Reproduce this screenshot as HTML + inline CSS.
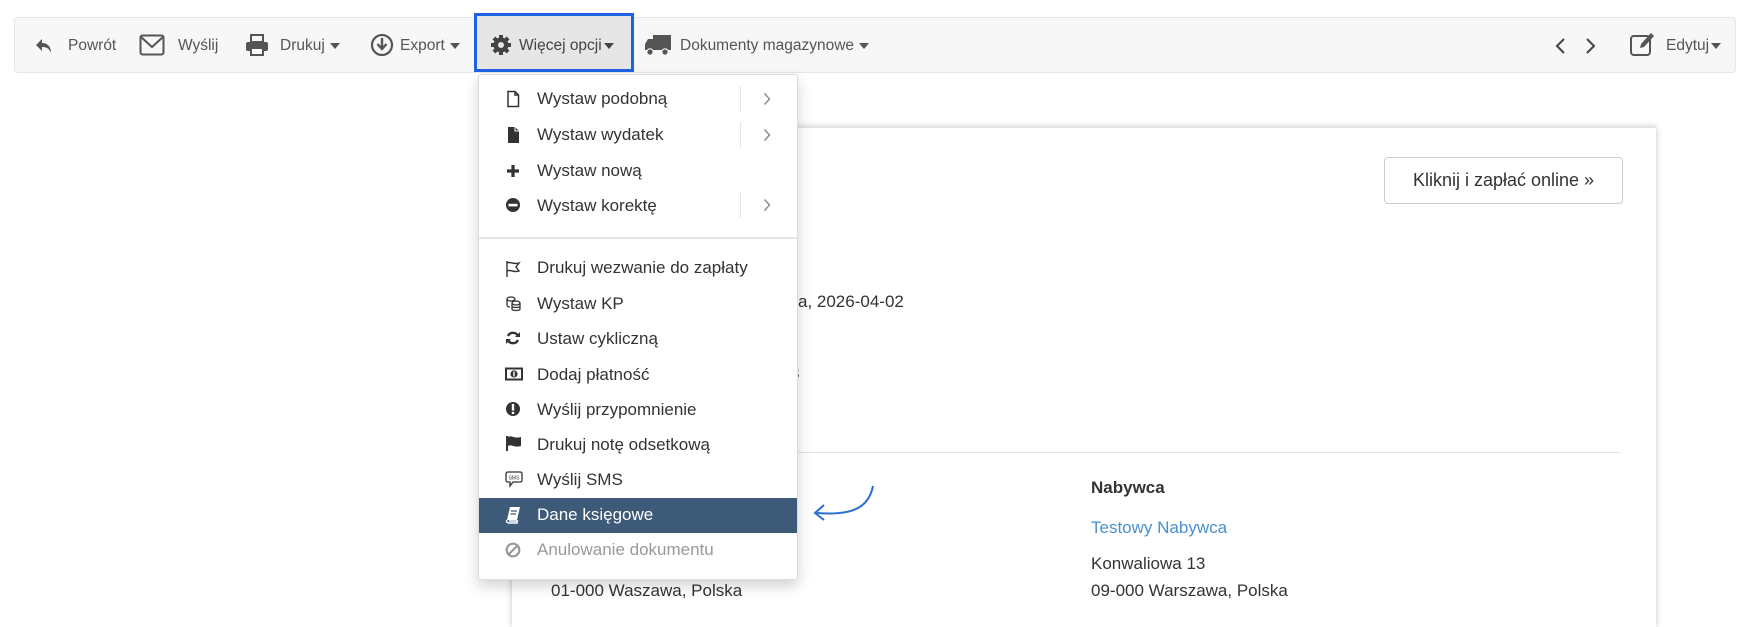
<!DOCTYPE html>
<html><head><meta charset="utf-8"><style>
*{margin:0;padding:0;box-sizing:border-box}
body{width:1738px;height:608px;background:#fff;font-family:"Liberation Sans",Arial,sans-serif;position:relative;overflow:hidden;color:#333}
.abs{position:absolute;white-space:nowrap}
.tb{position:absolute;left:14px;top:17px;width:1722px;height:56px;background:#f7f7f7;border:1px solid #e6e6e6;border-radius:4px}
.tt{position:absolute;top:36px;font-size:15.5px;color:#555;line-height:20px;white-space:nowrap}
.car{display:inline-block;width:0;height:0;border-left:5px solid transparent;border-right:5px solid transparent;border-top:6px solid #555;vertical-align:middle;margin-left:5px}
.ic{position:absolute}
.menu{position:absolute;left:478px;top:74px;width:320px;height:506px;background:#fff;border:1px solid #ddd;border-radius:3px;box-shadow:0 6px 14px rgba(0,0,0,.18)}
.mi{position:absolute;left:537px;font-size:17px;color:#333;line-height:20px;white-space:nowrap}
.mic{position:absolute;left:505px}
.sep{position:absolute;left:740px;width:1px;height:26px;background:#e5e5e5}
.chev{position:absolute;left:763px}
</style></head><body>

<div class="abs" style="left:512px;top:127px;width:1144px;height:500px;background:#fff;border-top:1px solid #e3e3e3;box-shadow:0 0 6px rgba(0,0,0,.25)"></div>
<div class="abs" style="left:1384px;top:157px;width:239px;height:47px;border:1px solid #ccc;border-radius:4px;font-size:18px;line-height:45px;text-align:center;color:#333">Kliknij i zapłać online »</div>
<div class="abs" style="left:798px;top:292px;font-size:17px">a, 2026-04-02</div>
<div class="abs" style="left:790px;top:364px;font-size:17px">3</div>
<div class="abs" style="left:798px;top:452px;width:823px;height:1px;background:#e5e5e5"></div>
<div class="abs" style="left:1091px;top:478px;font-size:17px;font-weight:bold;color:#333">Nabywca</div>
<div class="abs" style="left:1091px;top:518px;font-size:17px;color:#4a90d0">Testowy Nabywca</div>
<div class="abs" style="left:1091px;top:554px;font-size:17px">Konwaliowa 13</div>
<div class="abs" style="left:1091px;top:581px;font-size:17px">09-000 Warszawa, Polska</div>
<div class="abs" style="left:551px;top:581px;font-size:17px">01-000 Waszawa, Polska</div>
<svg class="ic" style="left:805px;top:480px" width="75" height="45"><path d="M68 6 C64 26 50 36 12 33" fill="none" stroke="#2a6fd6" stroke-width="2"/><path d="M19 25 L10 33 L19 40" fill="none" stroke="#2a6fd6" stroke-width="2"/></svg>

<div class="tb"></div>
<div class="abs" style="left:474px;top:13px;width:160px;height:59px;background:#e6e6e6;border:3px solid #1f62e6"></div>

<svg class="ic" style="left:34px;top:36px" width="20" height="20" viewBox="0 0 20 20"><path d="M8 3 L2 9 L8 15 V11 C12 11 15 12 17 17 C17 11 14 7 8 7 Z" fill="#555"/></svg>
<div class="tt" style="left:68px">Powrót</div>
<svg class="ic" style="left:139px;top:34px" width="26" height="22" viewBox="0 0 26 22"><rect x="1.5" y="1.5" width="23" height="19" rx="2" fill="none" stroke="#555" stroke-width="2"/><path d="M2 3 L13 13 L24 3" fill="none" stroke="#555" stroke-width="2"/></svg>
<div class="tt" style="left:178px">Wyślij</div>
<svg class="ic" style="left:245px;top:33px" width="24" height="24" viewBox="0 0 24 24"><rect x="6" y="2" width="12" height="7" fill="none" stroke="#555" stroke-width="2"/><rect x="1" y="9" width="22" height="9" rx="2" fill="#555"/><rect x="6" y="15" width="12" height="7" fill="#fff" stroke="#555" stroke-width="2"/></svg>
<div class="tt" style="left:280px">Drukuj<span class="car"></span></div>
<svg class="ic" style="left:370px;top:33px" width="24" height="24" viewBox="0 0 24 24"><circle cx="12" cy="12" r="10" fill="none" stroke="#555" stroke-width="2.2"/><path d="M12 5 V15 M7.5 11 L12 16 L16.5 11" fill="none" stroke="#555" stroke-width="2.4"/></svg>
<div class="tt" style="left:400px">Export<span class="car"></span></div>
<svg class="ic" style="left:490px;top:34px" width="22" height="22" viewBox="0 0 22 22"><g fill="#444"><circle cx="11" cy="11" r="7.5"/><rect x="9" y="1" width="4" height="20"/><rect x="1" y="9" width="20" height="4"/><rect x="9" y="1" width="4" height="20" transform="rotate(45 11 11)"/><rect x="9" y="1" width="4" height="20" transform="rotate(-45 11 11)"/></g><circle cx="11" cy="11" r="3" fill="#e6e6e6"/></svg>
<div class="tt" style="left:519px;color:#444">Więcej opcji<span class="car" style="margin-left:2px;border-top-color:#444"></span></div>
<svg class="ic" style="left:644px;top:33px" width="28" height="24" viewBox="0 0 28 24"><rect x="9" y="2" width="18" height="15" fill="#555"/><path d="M1 11 L4 6 H9 V17 H1 Z" fill="#555"/><circle cx="6" cy="19" r="3.2" fill="#555" stroke="#f7f7f7" stroke-width="1.2"/><circle cx="21" cy="19" r="3.2" fill="#555" stroke="#f7f7f7" stroke-width="1.2"/></svg>
<div class="tt" style="left:680px">Dokumenty magazynowe<span class="car"></span></div>

<svg class="ic" style="left:1550px;top:37px" width="50" height="18"><path d="M14 2 L7 9 L14 16 M37 2 L44 9 L37 16" fill="none" stroke="#444" stroke-width="2"/></svg>
<svg class="ic" style="left:1629px;top:31px" width="28" height="26" viewBox="0 0 28 26"><rect x="2" y="5" width="19" height="19" rx="3" fill="none" stroke="#555" stroke-width="2"/><path d="M11 17 L12 13 L22 2 L25 5 L15 16 Z" fill="#555"/></svg>
<div class="tt" style="left:1666px">Edytuj<span class="car" style="margin-left:2px"></span></div>

<div class="menu"></div>
<div class="abs" style="left:479px;top:237px;width:318px;height:2px;background:#e5e5e5"></div>
<div class="abs" style="left:479px;top:498px;width:318px;height:35px;background:#3d5a78"></div>

<svg class="mic" style="top:90px" width="16" height="18" viewBox="0 0 16 18"><path d="M3 1.5 H10 L13.5 5 V16.5 H3 Z M10 1.5 V5 H13.5" fill="none" stroke="#333" stroke-width="1.5"/></svg>
<div class="mi" style="top:89px">Wystaw podobną</div>
<div class="sep" style="top:86px"></div><svg class="chev" style="top:92px" width="8" height="14"><path d="M1.5 1.5 L6.5 7 L1.5 12.5" fill="none" stroke="#888" stroke-width="1.4"/></svg>

<svg class="mic" style="top:126px" width="16" height="18" viewBox="0 0 16 18"><path d="M3 1 H10 L14 5 V17 H3 Z" fill="#333"/><path d="M10 1 V5 H14" fill="none" stroke="#fff" stroke-width="1"/></svg>
<div class="mi" style="top:125px">Wystaw wydatek</div>
<div class="sep" style="top:122px"></div><svg class="chev" style="top:128px" width="8" height="14"><path d="M1.5 1.5 L6.5 7 L1.5 12.5" fill="none" stroke="#888" stroke-width="1.4"/></svg>

<svg class="mic" style="top:163px" width="16" height="16" viewBox="0 0 16 16"><path d="M8 2 V14 M2 8 H14" stroke="#333" stroke-width="3.2"/></svg>
<div class="mi" style="top:161px">Wystaw nową</div>

<svg class="mic" style="top:197px" width="16" height="16" viewBox="0 0 16 16"><circle cx="8" cy="8" r="7" fill="#333"/><rect x="3.5" y="6.8" width="9" height="2.6" fill="#fff"/></svg>
<div class="mi" style="top:196px">Wystaw korektę</div>
<div class="sep" style="top:192px"></div><svg class="chev" style="top:198px" width="8" height="14"><path d="M1.5 1.5 L6.5 7 L1.5 12.5" fill="none" stroke="#888" stroke-width="1.4"/></svg>

<svg class="mic" style="top:260px" width="18" height="18" viewBox="0 0 18 18"><path d="M2 1 V17 M2 3 C6 1 8 5 14 3 L11 7 L14 11 C8 13 6 9 2 11" fill="none" stroke="#333" stroke-width="1.4"/></svg>
<div class="mi" style="top:258px">Drukuj wezwanie do zapłaty</div>

<svg class="mic" style="top:295px" width="18" height="18" viewBox="0 0 18 18"><g fill="none" stroke="#333" stroke-width="1.3"><ellipse cx="6" cy="4" rx="4" ry="2"/><path d="M2 4 V10 C2 11 3 12 5 12"/><ellipse cx="11" cy="8" rx="4" ry="2"/><path d="M7 8 V14 C7 16 15 16 15 14 V8 M7 11 C7 13 15 13 15 11"/></g></svg>
<div class="mi" style="top:294px">Wystaw KP</div>

<svg class="mic" style="top:330px" width="16" height="16" viewBox="0 0 16 16"><g fill="none" stroke="#333" stroke-width="2.4"><path d="M13 6 A5.5 5.5 0 0 0 3 6"/><path d="M3 10 A5.5 5.5 0 0 0 13 10"/></g><path d="M10 7 H15 V2 Z M6 9 H1 V14 Z" fill="#333"/></svg>
<div class="mi" style="top:329px">Ustaw cykliczną</div>

<svg class="mic" style="top:367px" width="18" height="14" viewBox="0 0 18 14"><rect x="1" y="1.5" width="16" height="11" fill="none" stroke="#333" stroke-width="2"/><circle cx="9" cy="7" r="3.6" fill="#333"/><rect x="8.3" y="4.5" width="1.4" height="5" fill="#fff"/></svg>
<div class="mi" style="top:365px">Dodaj płatność</div>

<svg class="mic" style="top:401px" width="16" height="16" viewBox="0 0 16 16"><circle cx="8" cy="8" r="7" fill="#333"/><rect x="6.8" y="3" width="2.4" height="6.5" fill="#fff"/><rect x="6.8" y="10.8" width="2.4" height="2.3" fill="#fff"/></svg>
<div class="mi" style="top:400px">Wyślij przypomnienie</div>

<svg class="mic" style="top:435px" width="18" height="16" viewBox="0 0 18 16"><path d="M2 1 V16" stroke="#333" stroke-width="2"/><path d="M3 2 C7 0 9 4 16 2 V11 C9 13 7 9 3 11 Z" fill="#333"/></svg>
<div class="mi" style="top:435px">Drukuj notę odsetkową</div>

<svg class="mic" style="top:470px" width="18" height="18" viewBox="0 0 18 18"><path d="M3 2 H15 Q17 2 17 4 V10 Q17 12 15 12 H8 L5 16 V12 H3 Q1 12 1 10 V4 Q1 2 3 2 Z" fill="none" stroke="#333" stroke-width="1.3"/><text x="9" y="9.5" font-size="5" text-anchor="middle" fill="#333" font-family="Liberation Sans">SMS</text></svg>
<div class="mi" style="top:470px">Wyślij SMS</div>

<svg class="mic" style="top:506px" width="16" height="18" viewBox="0 0 16 18"><path d="M5 1 H15 L12 14 H2 Z" fill="#fff"/><path d="M2 14 C1 16 2 17 4 17 H12 L12.5 15 H4" fill="none" stroke="#fff" stroke-width="1.4"/><path d="M6 5 H12 M5.5 8 H11" stroke="#3d5a78" stroke-width="1.2"/></svg>
<div class="mi" style="top:505px;color:#fff">Dane księgowe</div>

<svg class="mic" style="top:542px" width="16" height="16" viewBox="0 0 16 16"><circle cx="8" cy="8" r="6.3" fill="none" stroke="#999" stroke-width="2.2"/><path d="M12.5 3.5 L3.5 12.5" stroke="#999" stroke-width="2.2"/></svg>
<div class="mi" style="top:540px;color:#999">Anulowanie dokumentu</div>
</body></html>
